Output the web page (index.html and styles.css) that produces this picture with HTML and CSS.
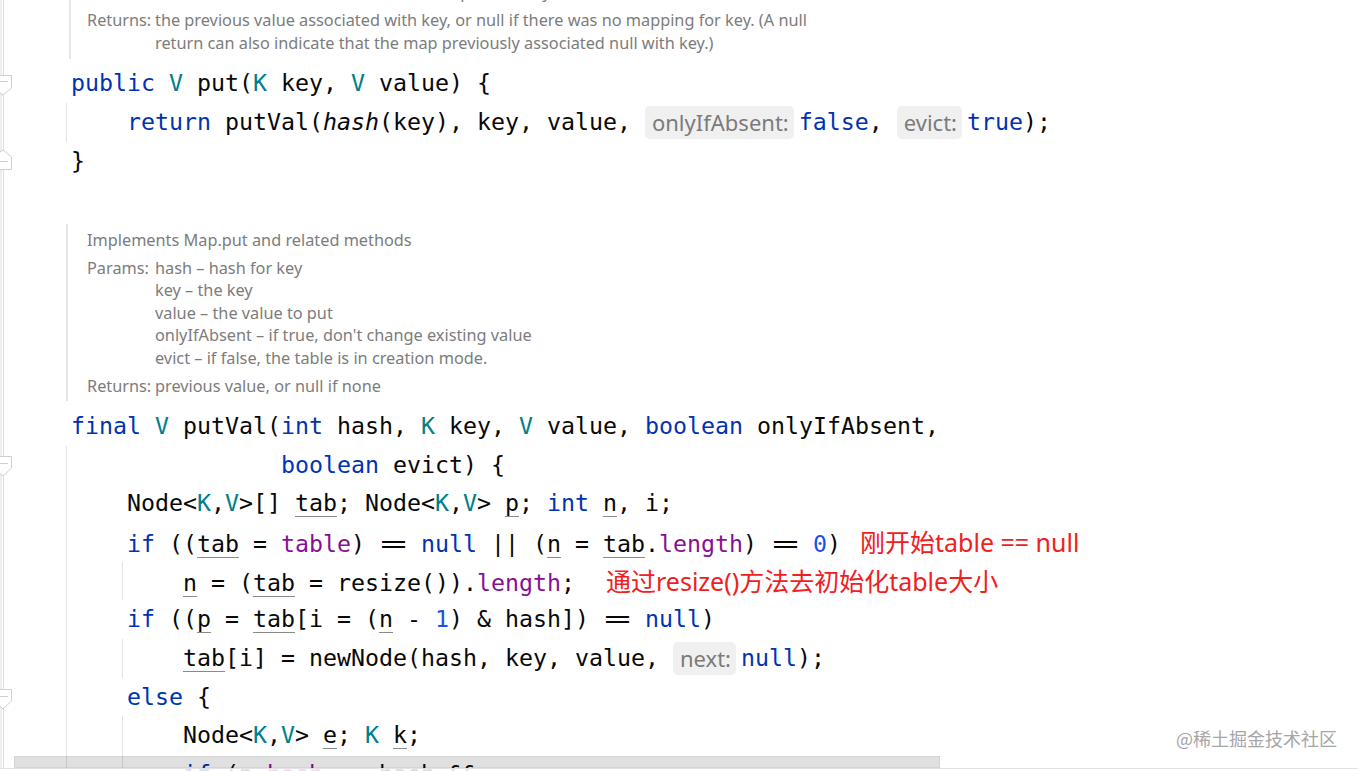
FILE: index.html
```html
<!DOCTYPE html>
<html>
<head>
<meta charset="utf-8">
<title>HashMap.put</title>
<link rel="stylesheet" href="styles.css">
</head>
<body>
<div class="editor">
  <div class="gutter">
    <svg width="14" height="771" viewBox="0 0 14 771">
      <line x1="1" y1="0" x2="1" y2="771" stroke="#dcdcdc" stroke-width="1"/>
      <line x1="3.5" y1="0" x2="3.5" y2="771" stroke="#dcdcdc" stroke-width="1"/>
      <path d="M-8 75.5 H11.5 V88 L3 95 L-6 88 Z" fill="#fff" stroke="#cfcfcf"/>
      <line x1="-3" y1="81.5" x2="8" y2="81.5" stroke="#cfcfcf"/>
      <path d="M3 150 L11.5 157 V169.5 H-8 V157 Z" fill="#fff" stroke="#cfcfcf"/>
      <line x1="-3" y1="161.5" x2="8" y2="161.5" stroke="#cfcfcf"/>
      <path d="M-8 456.5 H11.5 V468 L3 476 L-6 468 Z" fill="#fff" stroke="#cfcfcf"/>
      <line x1="-3" y1="463.5" x2="8" y2="463.5" stroke="#cfcfcf"/>
      <path d="M-8 689.5 H11.5 V701 L3 709 L-6 701 Z" fill="#fff" stroke="#cfcfcf"/>
      <line x1="-3" y1="696.5" x2="8" y2="696.5" stroke="#cfcfcf"/>
    </svg>
  </div>
  <div class="main">
    <div class="doc doc-top">
      <span class="lbl cut"></span><span class="cut">value – value to be associated with the specified key</span>
      <span class="lbl">Returns:</span><span>the previous value associated with key, or null if there was no mapping for key. (A null<br>return can also indicate that the map previously associated null with key.)</span>
    </div>

    <div class="code code-put">
      <div class="ln"><span class="c"><b class="kw">public</b> <b class="tp">V</b> put(<b class="tp">K</b> key, <b class="tp">V</b> value) {</span></div>
      <div class="ln"><i class="ind"></i><span class="c"><b class="kw">return</b> putVal(<em>hash</em>(key), key, value, <span class="hint">onlyIfAbsent:</span><b class="kw">false</b>, <span class="hint">evict:</span><b class="kw">true</b>);</span></div>
      <div class="ln"><span class="c">}</span></div>
    </div>

    <div class="doc doc-bottom">
      <div class="doc-desc">Implements Map.put and related methods</div>
      <div class="doc-grid">
        <span class="lbl">Params:</span>
        <span>hash – hash for key<br>key – the key<br>value – the value to put<br>onlyIfAbsent – if true, don't change existing value<br>evict – if false, the table is in creation mode.</span>
      </div>
      <div class="doc-grid doc-ret">
        <span class="lbl">Returns:</span><span>previous value, or null if none</span>
      </div>
    </div>

    <div class="code code-putval">
      <div class="ln"><span class="c"><b class="kw">final</b> <b class="tp">V</b> putVal(<b class="kw">int</b> hash, <b class="tp">K</b> key, <b class="tp">V</b> value, <b class="kw">boolean</b> onlyIfAbsent,</span></div>
      <div class="ln"><i class="ind"></i><span class="c">           <b class="kw">boolean</b> evict) {</span></div>
      <div class="ln"><i class="ind"></i><span class="c">Node&lt;<b class="tp">K</b>,<b class="tp">V</b>&gt;[] <u>tab</u>; Node&lt;<b class="tp">K</b>,<b class="tp">V</b>&gt; <u>p</u>; <b class="kw">int</b> <u>n</u>, i;</span></div>
      <div class="ln"><i class="ind"></i><span class="c"><b class="kw">if</b> ((<u>tab</u> = <b class="fd">table</b>) <span class="eq">==</span> <b class="kw">null</b> || (<u>n</u> = <u>tab</u>.<b class="fd">length</b>) <span class="eq">==</span> <b class="num">0</b>)<span class="note note-a">刚开始table == null</span></span></div>
      <div class="ln"><i class="ind"></i><i class="ind"></i><span class="c"><u>n</u> = (<u>tab</u> = resize()).<b class="fd">length</b>;<span class="note note-b">通过resize()方法去初始化table大小</span></span></div>
      <div class="ln"><i class="ind"></i><span class="c"><b class="kw">if</b> ((<u>p</u> = <u>tab</u>[i = (<u>n</u> - <b class="num">1</b>) &amp; hash]) <span class="eq">==</span> <b class="kw">null</b>)</span></div>
      <div class="ln"><i class="ind"></i><i class="ind"></i><span class="c"><u>tab</u>[i] = newNode(hash, key, value, <span class="hint">next:</span><b class="kw">null</b>);</span></div>
      <div class="ln"><i class="ind"></i><span class="c"><b class="kw">else</b> {</span></div>
      <div class="ln"><i class="ind"></i><i class="ind"></i><span class="c">Node&lt;<b class="tp">K</b>,<b class="tp">V</b>&gt; <u>e</u>; <b class="tp">K</b> <u>k</u>;</span></div>
      <div class="ln"><i class="ind"></i><i class="ind"></i><span class="c"><b class="kw">if</b> (<u>p</u>.<b class="fd">hash</b> <span class="eq">==</span> hash &amp;&amp;</span></div>
    </div>
  </div>

  <div class="hscroll"></div>
  <div class="bottom-edge"></div>
  <div class="watermark">@稀土掘金技术社区</div>
</div>
</body>
</html>
```

FILE: styles.css
```css
* { box-sizing: border-box; }

html, body {
  margin: 0;
  padding: 0;
  background: #ffffff;
}

body {
  width: 1358px;
  height: 771px;
  overflow: hidden;
}

.editor {
  position: relative;
  display: flex;
  width: 1358px;
  height: 771px;
  overflow: hidden;
  background: #ffffff;
}

.gutter {
  flex: none;
  width: 66px;
}

.gutter svg {
  display: block;
  overflow: visible;
}

.main {
  flex: 1;
  min-width: 0;
  overflow: hidden;
}

/* ---------- documentation blocks ---------- */
.doc {
  font-family: "Noto Sans", "Open Sans", sans-serif;
  font-size: 16.3px;
  line-height: 22.5px;
  color: #7c7c7c;
  white-space: nowrap;
}

.doc-top {
  display: grid;
  grid-template-columns: 68px 1fr;
  margin-top: -24.5px;
  margin-left: 3px;
  padding: 0 0 4px 16px;
  border-left: 2px solid #e6e6e6;
  line-height: 23px;
}

.doc-top .cut {
  line-height: 33px;
}

.doc-bottom {
  margin-top: 44px;
  padding: 4.75px 0 4px 19px;
  border-left: 2px solid #e6e6e6;
}

.doc-grid {
  display: grid;
  grid-template-columns: 68px 1fr;
  margin-top: 5.5px;
}

.lbl {
  display: block;
}

/* ---------- code ---------- */
.code {
  font-family: "DejaVu Sans Mono", "Liberation Mono", monospace;
  font-size: 23.25px;
  color: #080808;
}

.code-put {
  margin-top: 5.65px;
}

.code-putval {
  margin-top: 5.4px;
}

.ln {
  display: flex;
  height: 38.7px;
}

.ind {
  flex: none;
  width: 56px;
  border-left: 1px solid #e3e3e3;
}

.c {
  padding-left: 5px;
  white-space: pre;
  line-height: 38.7px;
}

.c b { font-weight: normal; }
.kw { color: #0033b3; }
.tp { color: #007e8a; }
.fd { color: #871094; }
.num { color: #1750eb; }
.c em { font-style: italic; }

.c u {
  text-decoration: underline;
  text-decoration-color: #8a8a8a;
  text-decoration-thickness: 1px;
  text-underline-offset: 5px;
}

.eq {
  display: inline-block;
  letter-spacing: -3px;
  padding-left: 2px;
  padding-right: 4px;
}

.hint {
  display: inline-block;
  font-family: "Noto Sans", "Open Sans", sans-serif;
  font-size: 22px;
  line-height: 33px;
  color: #7b7b7b;
  background: #f0f0f0;
  border-radius: 5px;
  padding: 0 5px 0 7px;
  margin-right: 5px;
  vertical-align: middle;
  position: relative;
  top: -1px;
}

.note {
  font-family: "Noto Sans", "Noto Sans CJK SC", sans-serif;
  font-size: 25px;
  color: #f0201e;
}

.note-a { margin-left: 19px; }
.note-b { margin-left: 31px; }

/* ---------- overlays ---------- */
.hscroll {
  position: absolute;
  left: 14px;
  top: 756px;
  width: 926px;
  height: 12px;
  background: rgba(0, 0, 0, 0.12);
  border: 1px solid rgba(0, 0, 0, 0.05);
}

.bottom-edge {
  position: absolute;
  left: 0;
  right: 0;
  top: 768px;
  height: 3px;
  background: rgba(255, 255, 255, 0.85);
  border-top: 1px solid #e2e2e2;
}

.watermark {
  position: absolute;
  left: 1176px;
  top: 725px;
  font-family: "Noto Sans CJK SC", "Noto Sans", sans-serif;
  font-size: 18px;
  line-height: 26px;
  color: #a6a6a6;
  white-space: nowrap;
}
```
